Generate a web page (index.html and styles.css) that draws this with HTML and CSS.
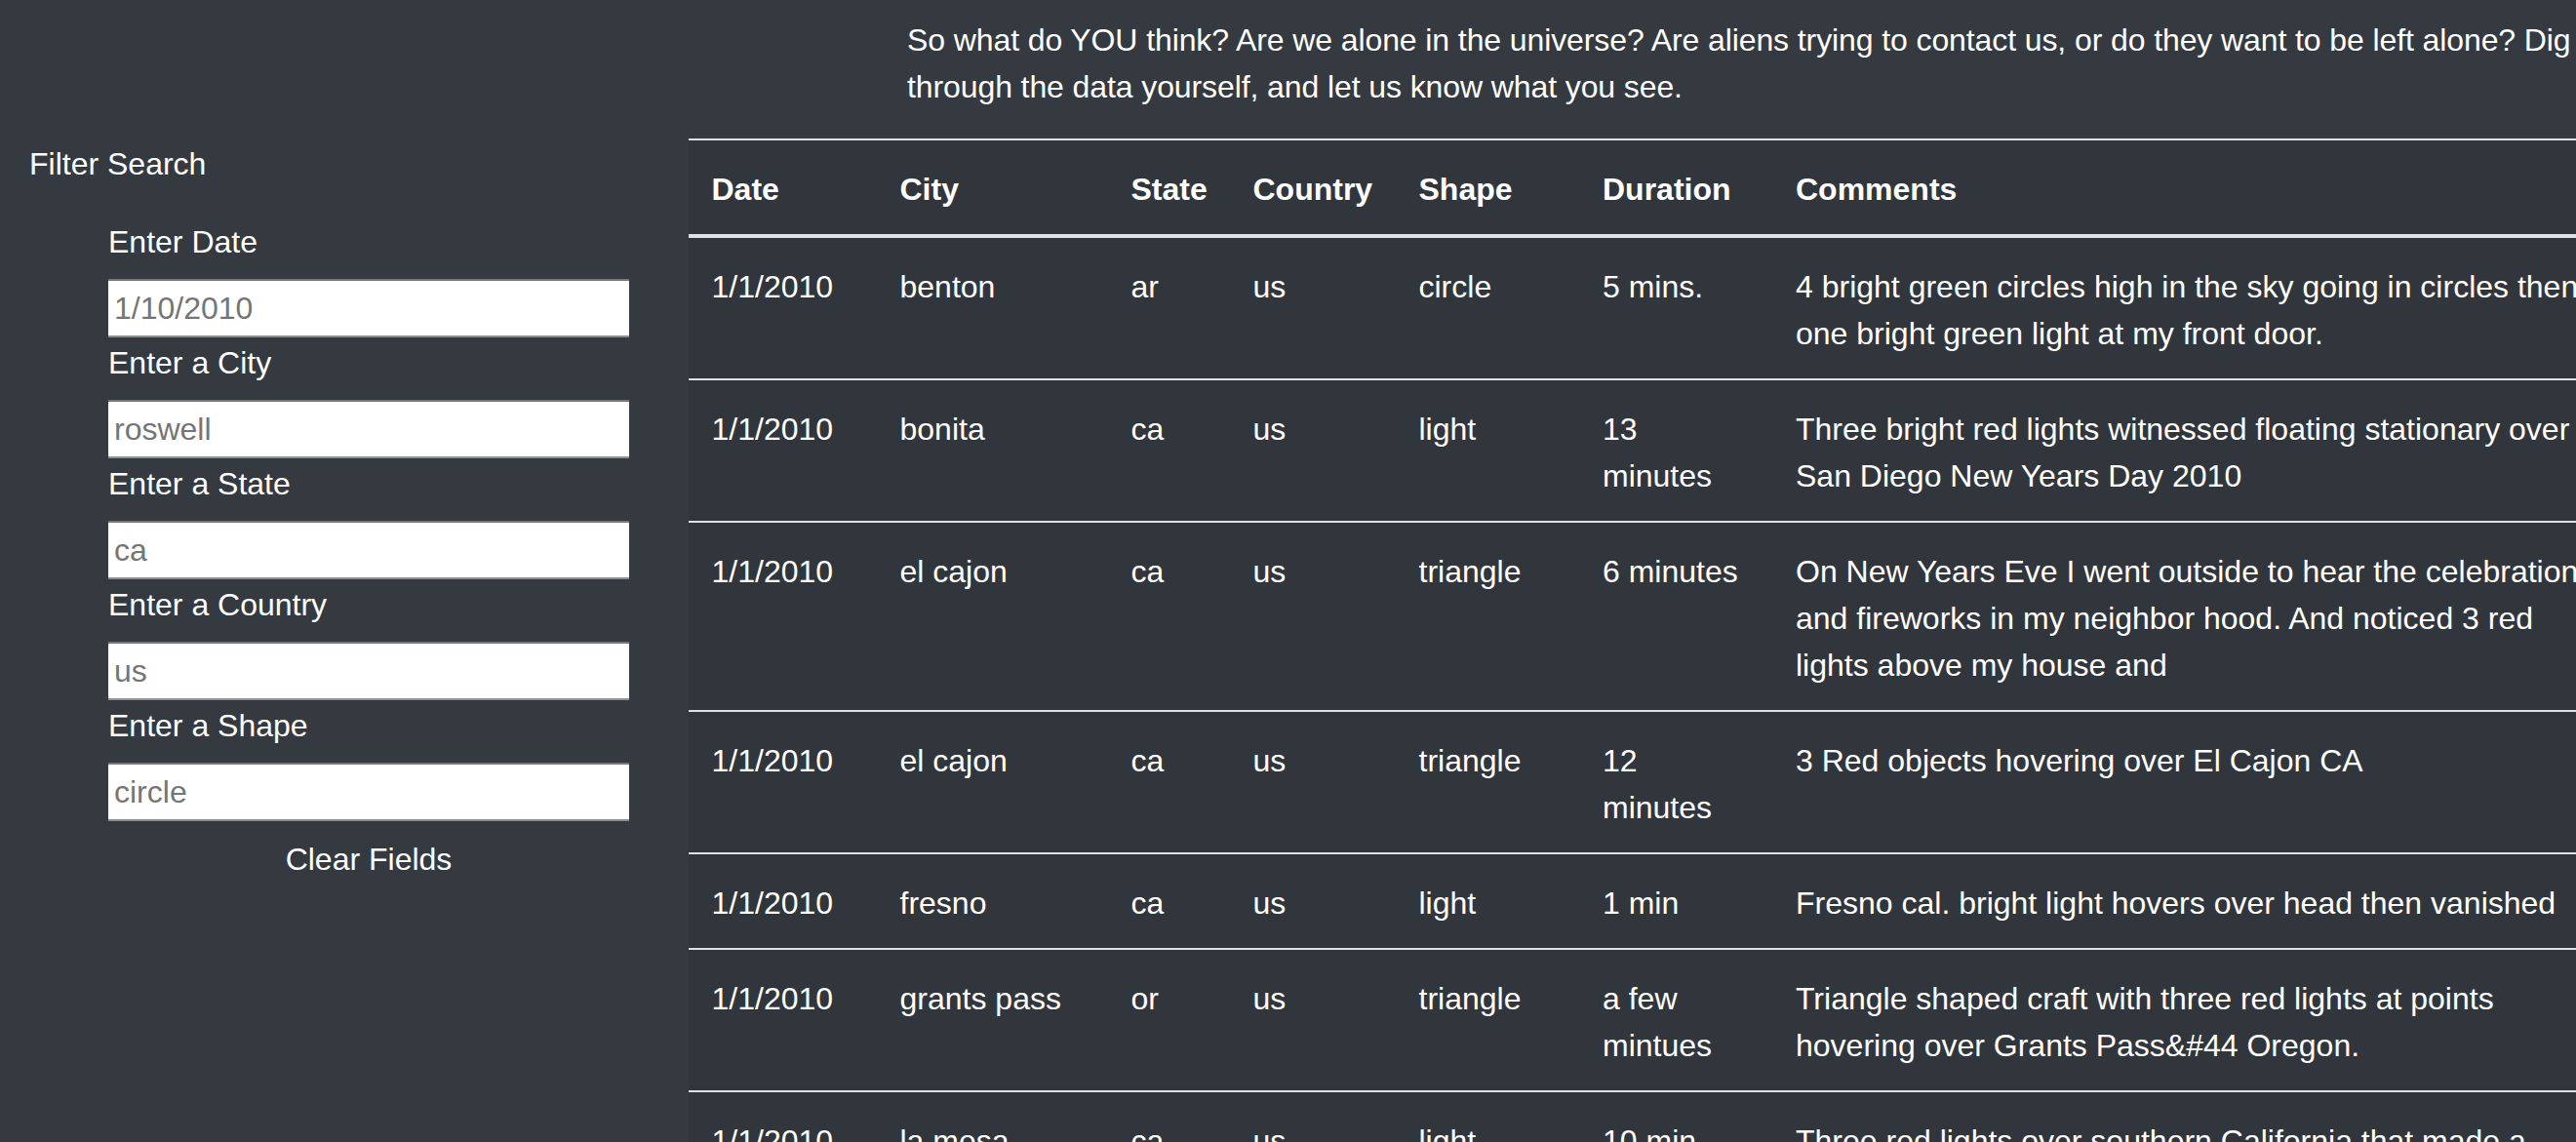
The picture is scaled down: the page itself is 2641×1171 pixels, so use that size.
FILE: index.html
```html
<!DOCTYPE html>
<html lang="en">
<head>
<meta charset="utf-8">
<title>UFO Sightings</title>
<link rel="stylesheet" href="styles.css">
</head>
<body>
<div class="intro">
  <p>So what do YOU think? Are we alone in the universe? Are aliens trying to contact us, or do they want to be left alone? Dig through the data yourself, and let us know what you see.</p>
</div>
<div class="layout">
  <aside class="sidebar">
    <div class="filter-title">Filter Search</div>
    <ul class="filters">
      <li class="filter"><label class="filter-label" for="datetime">Enter Date</label><input class="filter-input" id="datetime" type="text" placeholder="1/10/2010"></li>
      <li class="filter"><label class="filter-label" for="city">Enter a City</label><input class="filter-input" id="city" type="text" placeholder="roswell"></li>
      <li class="filter"><label class="filter-label" for="state">Enter a State</label><input class="filter-input" id="state" type="text" placeholder="ca"></li>
      <li class="filter"><label class="filter-label" for="country">Enter a Country</label><input class="filter-input" id="country" type="text" placeholder="us"></li>
      <li class="filter"><label class="filter-label" for="shape">Enter a Shape</label><input class="filter-input" id="shape" type="text" placeholder="circle"></li>
      <li class="filter"><button class="clear-btn" type="button">Clear Fields</button></li>
    </ul>
  </aside>
  <main class="content">
    <table class="ufo-table">
      <colgroup>
        <col class="c-date"><col class="c-city"><col class="c-state"><col class="c-country"><col class="c-shape"><col class="c-duration"><col class="c-comments">
      </colgroup>
      <thead>
        <tr><th>Date</th><th>City</th><th>State</th><th>Country</th><th>Shape</th><th>Duration</th><th>Comments</th></tr>
      </thead>
      <tbody>
        <tr><td>1/1/2010</td><td>benton</td><td>ar</td><td>us</td><td>circle</td><td>5 mins.</td><td>4 bright green circles high in the sky going in circles then one bright green light at my front door.</td></tr>
        <tr><td>1/1/2010</td><td>bonita</td><td>ca</td><td>us</td><td>light</td><td>13 minutes</td><td>Three bright red lights witnessed floating stationary over San Diego New Years Day 2010</td></tr>
        <tr><td>1/1/2010</td><td>el cajon</td><td>ca</td><td>us</td><td>triangle</td><td>6 minutes</td><td>On New Years Eve I went outside to hear the celebration and fireworks in my neighbor hood. And noticed 3 red lights above my house and</td></tr>
        <tr><td>1/1/2010</td><td>el cajon</td><td>ca</td><td>us</td><td>triangle</td><td>12 minutes</td><td>3 Red objects hovering over El Cajon CA</td></tr>
        <tr><td>1/1/2010</td><td>fresno</td><td>ca</td><td>us</td><td>light</td><td>1 min</td><td>Fresno cal. bright light hovers over head then vanished</td></tr>
        <tr><td>1/1/2010</td><td>grants pass</td><td>or</td><td>us</td><td>triangle</td><td>a few mintues</td><td>Triangle shaped craft with three red lights at points hovering over Grants Pass&amp;#44 Oregon.</td></tr>
        <tr><td>1/1/2010</td><td>la mesa</td><td>ca</td><td>us</td><td>light</td><td>10 min</td><td>Three red lights over southern California that made a triangle</td></tr>
      </tbody>
    </table>
  </main>
</div>
</body>
</html>
```

FILE: styles.css
```css
html, body {
  overflow: hidden;
}

body {
  margin: 0;
  background: #343a40;
  color: #ffffff;
  font-family: "Liberation Sans", Arial, sans-serif;
  font-size: 32px;
  line-height: 48px;
}

.intro {
  margin-left: 930px;
  padding-top: 17px;
}

.intro p {
  margin: 0 0 29px;
  width: 1780px;
  letter-spacing: -0.1px;
}

.layout {
  display: flex;
  align-items: flex-start;
}

.sidebar {
  flex: 0 0 705.5px;
  box-sizing: border-box;
  padding-left: 30px;
}

.filter-title {
  padding-top: 2px;
  line-height: 48px;
}

.filters {
  list-style: none;
  margin: 30px 0 0;
  padding: 0 0 0 81px;
}

.filter-label {
  display: block;
  padding-top: 2px;
  margin-bottom: 14px;
}

.filter-input {
  display: block;
  box-sizing: border-box;
  width: 534px;
  height: 60px;
  margin: 0;
  padding: 0 6px;
  background: #ffffff;
  border: 0;
  border-top: 2px solid #767676;
  border-bottom: 2px solid #8f8f8f;
  font-family: inherit;
  font-size: 32px;
  color: #495057;
}

.filter-input::placeholder {
  color: #757575;
}

.clear-btn {
  display: block;
  width: 534px;
  margin-top: 15px;
  padding: 0;
  background: transparent;
  border: 0;
  color: #ffffff;
  font-family: inherit;
  font-size: 32px;
  line-height: 48px;
  text-align: center;
  cursor: pointer;
}

.content {
  flex: none;
}

.ufo-table {
  table-layout: fixed;
  width: 1979.5px;
  border-collapse: collapse;
  background: #31363c;
  color: #ffffff;
}

.c-date { width: 193px; }
.c-city { width: 237px; }
.c-state { width: 125px; }
.c-country { width: 170px; }
.c-shape { width: 188.5px; }
.c-duration { width: 198px; }
.c-comments { width: 868px; }

.ufo-table th,
.ufo-table td {
  padding: 26px 24px 22px;
  text-align: left;
  vertical-align: top;
  border-top: 2px solid #dee2e6;
  line-height: 48px;
}

.ufo-table thead th {
  vertical-align: bottom;
  border-bottom: 4px solid #dee2e6;
  font-weight: bold;
}
```
